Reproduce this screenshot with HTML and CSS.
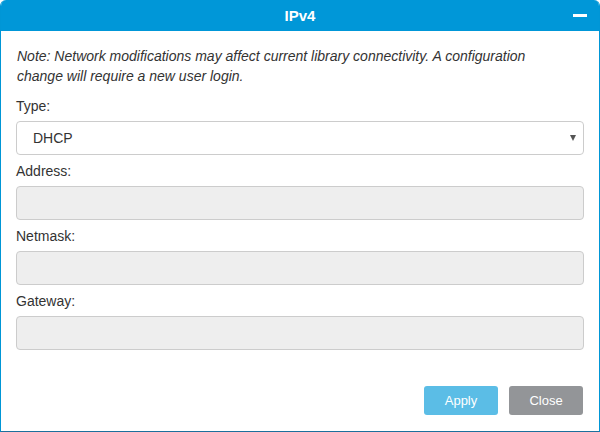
FILE: index.html
```html
<!DOCTYPE html>
<html>
<head>
<meta charset="utf-8">
<link rel="stylesheet" href="styles.css">
</head>
<body>
<div class="dialog">
  <div class="header">
    <span class="title">IPv4</span>
    <span class="minimize"></span>
  </div>
  <div class="body">
    <p class="note">Note: Network modifications may affect current library connectivity. A configuration change will require a new user login.</p>
    <div class="group">
      <label class="label">Type:</label>
      <div class="select"><span>DHCP</span><span class="caret"></span></div>
    </div>
    <div class="group">
      <label class="label">Address:</label>
      <div class="input"></div>
    </div>
    <div class="group">
      <label class="label">Netmask:</label>
      <div class="input"></div>
    </div>
    <div class="group">
      <label class="label">Gateway:</label>
      <div class="input"></div>
    </div>
  </div>
  <div class="footer">
    <button class="btn apply">Apply</button>
    <button class="btn close">Close</button>
  </div>
</div>
</body>
</html>
```
FILE: styles.css
```css
* { box-sizing: border-box; }
html, body { margin: 0; padding: 0; background: #fff; }
body { font-family: "Liberation Sans", Arial, sans-serif; color: #333; }
.dialog {
  width: 600px;
  height: 432px;
  border: 1px solid #0096d6;
  border-top: none;
  border-bottom-color: #1d6f9c;
  border-radius: 6px 6px 0 0;
  display: flex;
  flex-direction: column;
  overflow: hidden;
}
.header {
  height: 31px;
  background: #0097d8;
  position: relative;
  display: flex;
  align-items: center;
  justify-content: center;
  margin: 0 -1px;
}
.title { color: #fff; font-weight: bold; font-size: 15px; }
.minimize {
  position: absolute;
  right: 13px;
  top: 14px;
  width: 14px;
  height: 3px;
  background: #fff;
}
.body { padding: 15px 15px 0 15px; flex: 1; }
.note {
  margin: 0 0 10px 1px;
  max-width: 540px;
  font-style: italic;
  font-size: 14px;
  line-height: 20px;
  color: #333;
}
.group { margin-bottom: 6px; }
.label { display: block; font-size: 14px; line-height: 20px; margin-bottom: 5px; }
.select, .input {
  height: 34px;
  border: 1px solid #ccc;
  border-radius: 4px;
}
.select {
  display: flex;
  align-items: center;
  justify-content: space-between;
  padding: 0 7px 0 16px;
  font-size: 14px;
  background: #fff;
}
.caret {
  width: 0; height: 0;
  border-left: 3.5px solid transparent;
  border-right: 3.5px solid transparent;
  border-top: 6px solid #555;
}
.input { background: #eee; }
.footer {
  display: flex;
  justify-content: flex-end;
  gap: 11px;
  padding: 0 16px 16px 0;
}
.btn {
  width: 74px;
  height: 29px;
  border: none;
  border-radius: 3px;
  color: #fff;
  font-family: "Liberation Sans", Arial, sans-serif;
  font-size: 13px;
}
.apply { background: #5bbde6; }
.close { background: #939598; }
```
